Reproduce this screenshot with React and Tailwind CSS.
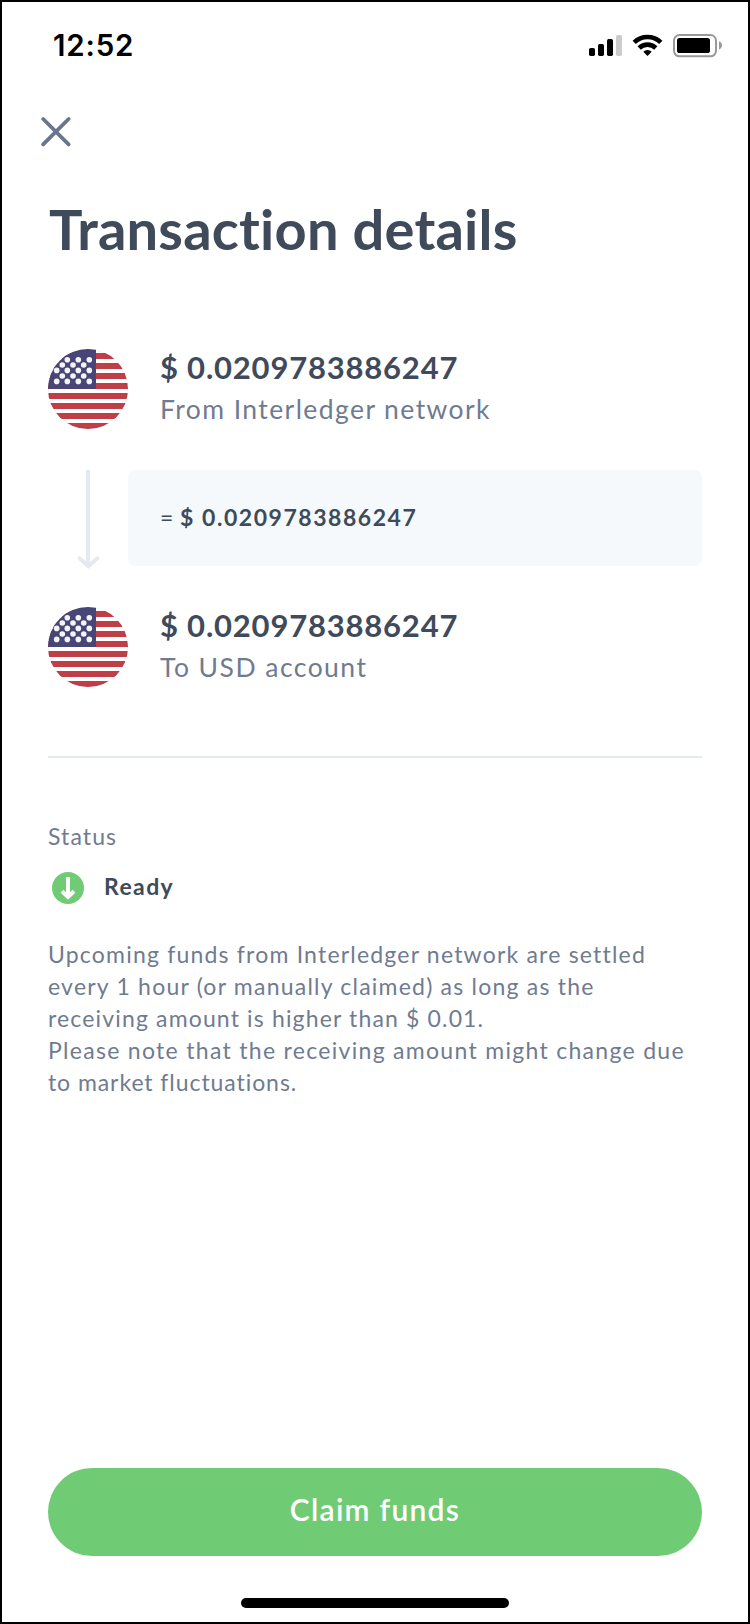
import React from "react";

const stripes = [4, 14, 24, 34, 44, 54, 64, 74];
const stars = [
  [19.3, 10.7], [30.3, 10.7], [41.3, 10.7],
  [14.3, 16], [25, 16], [35.7, 16],
  [8.7, 21.4], [19.3, 21.4], [30.3, 21.4], [41.3, 21.4],
  [14.3, 27], [25, 27], [35.7, 27],
  [8.7, 32.4], [19.3, 32.4], [30.3, 32.4], [41.3, 32.4],
];

function UsFlag({ id }) {
  return (
    <svg className="h-20 w-20 shrink-0" viewBox="0 0 80 80">
      <defs>
        <clipPath id={id}>
          <circle cx="40" cy="40" r="40" />
        </clipPath>
      </defs>
      <g clipPath={`url(#${id})`}>
        <rect width="80" height="80" fill="#fff" />
        {stripes.map((y) => (
          <rect key={y} y={y} width="80" height="6" fill="#c03e48" />
        ))}
        <rect width="48" height="40" fill="#484677" />
        {stars.map(([x, y]) => (
          <circle key={`${x}-${y}`} cx={x} cy={y} r="2.8" fill="#f4f4f7" />
        ))}
        <circle cx="40" cy="40" r="39.5" fill="none" stroke="#000" strokeOpacity="0.06" />
      </g>
    </svg>
  );
}

function StatusBar() {
  return (
    <header className="flex h-[86px] items-start justify-between pl-[51px] pr-[26px]">
      <span className="pt-[23px] font-['Inter',sans-serif] text-[29.5px] leading-10 font-semibold tracking-[0.8px] text-black">
        12:52
      </span>
      <svg className="mt-[30px] h-7 w-[135px]" viewBox="587 32 135 28">
        <rect x="589" y="48" width="6" height="8" rx="1.7" />
        <rect x="598" y="44" width="6" height="12" rx="1.7" />
        <rect x="607" y="39" width="6" height="17" rx="1.7" />
        <rect x="616" y="35" width="6" height="21" rx="1.7" fill="#ccc" />
        <g fill="none" stroke="#000" strokeWidth="4.6">
          <path d="M634.2 42.4a19.2 19.2 0 0 1 26.6 0" />
          <path d="M639.2 48a12 12 0 0 1 16.6 0" />
        </g>
        <path d="M647.5 56l-4.2-4.3a6.2 6.2 0 0 1 8.400 0z" />
        <rect x="674" y="35" width="42" height="21.3" rx="5.5" fill="none" stroke="#999" strokeWidth="2" />
        <rect x="677" y="38" width="33" height="15" rx="2.6" />
        <path d="M719 41.2c2 .8 3 2.2 3 4s-1 3.400-3 4.200z" fill="#999" />
      </svg>
    </header>
  );
}

function Amount({ flagId, amount, label, labelSpacing }) {
  return (
    <div className="flex h-20 gap-8">
      <UsFlag id={flagId} />
      <div className="flex flex-col whitespace-nowrap">
        <span className="-mt-0.5 h-[43px] pt-px text-[31px] leading-[38px] font-bold tracking-[0.8px]">
          {amount}
        </span>
        <span className={`text-[26.5px] leading-10 text-[#6f7b91] ${labelSpacing}`}>{label}</span>
      </div>
    </div>
  );
}

export default function App() {
  return (
    <div className="flex h-[1624px] w-[750px] flex-col border-2 border-black bg-white font-['Lato',sans-serif] text-[#3f4a5b]">
      <StatusBar />
      <button className="ml-[37px] mt-[27px] h-8 w-8 self-start" aria-label="Close">
        <svg viewBox="0 0 32 32" fill="none" stroke="#69768d" strokeWidth="3.8" strokeLinecap="round">
          <path d="M4.200 4L29.600 29.400M29.600 4L4.200 29.400" />
        </svg>
      </button>
      <main className="flex flex-1 flex-col px-[46px] pt-[50px]">
        <h1 className="pl-px text-[56px] leading-[64px] font-bold tracking-[0.22px] whitespace-nowrap">
          Transaction details
        </h1>
        <section className="mt-[88px] flex flex-col">
          <Amount flagId="flag-from" amount="$ 0.0209783886247" label="From Interledger network" labelSpacing="tracking-[1.42px]" />
          <div className="mt-[41px] flex h-24">
            <svg className="-mb-1 h-[100px] w-20 shrink-0" viewBox="0 0 80 100" fill="none" stroke="#e5e9f0" strokeWidth="4">
              <path d="M40 0V96" />
              <path d="M31.500 88.200L40.400 96.200L49.300 88.200" strokeLinecap="round" />
            </svg>
            <div className="flex flex-1 items-center rounded-[7px] bg-[#f5f9fc] pb-[3px] pl-8 text-[23px] leading-8 whitespace-nowrap">
              <span className="w-5">=</span>
              <span className="font-bold tracking-[1.54px]">$ 0.0209783886247</span>
            </div>
          </div>
          <div className="mt-[41px]">
            <Amount flagId="flag-to" amount="$ 0.0209783886247" label="To USD account" labelSpacing="tracking-[1.46px]" />
          </div>
        </section>
        <hr className="mt-[69px] border-t-2 border-[#e5e9f0]" />
        <section className="mt-[62px] flex flex-col text-[23px] leading-8 whitespace-nowrap text-[#6f7b91]">
          <span className="tracking-[1.1px]">Status</span>
          <div className="mt-[17px] flex h-8 items-center gap-5 pt-px pl-1">
            <svg className="mt-1 h-8 w-8" viewBox="0 0 32 32">
              <circle cx="16" cy="16" r="16" fill="#70cb75" />
              <path d="M16 5V25M10 19.300L16 25L22 19.300" fill="none" stroke="#fff" strokeWidth="4" />
            </svg>
            <span className="font-bold tracking-[1.4px] text-[#3f4a5b]">Ready</span>
          </div>
          <p className="mt-[37px] tracking-[1.2px]">Upcoming funds from Interledger network are settled</p>
          <p className="tracking-[1.22px]">every 1 hour (or manually claimed) as long as the</p>
          <p className="tracking-[1.15px]">receiving amount is higher than $ 0.01.</p>
          <p className="tracking-[1.3px]">Please note that the receiving amount might change due</p>
          <p className="tracking-[0.93px]">to market fluctuations.</p>
        </section>
        <button className="mt-auto mb-[42px] flex h-[88px] items-center justify-center rounded-full bg-[#70cb75] pb-1.5 text-[30px] leading-9 font-semibold tracking-[1.27px] text-white">
          Claim funds
        </button>
      </main>
      <div className="mb-3.5 h-2.5 w-[268px] self-center rounded-full bg-black" />
    </div>
  );
}
